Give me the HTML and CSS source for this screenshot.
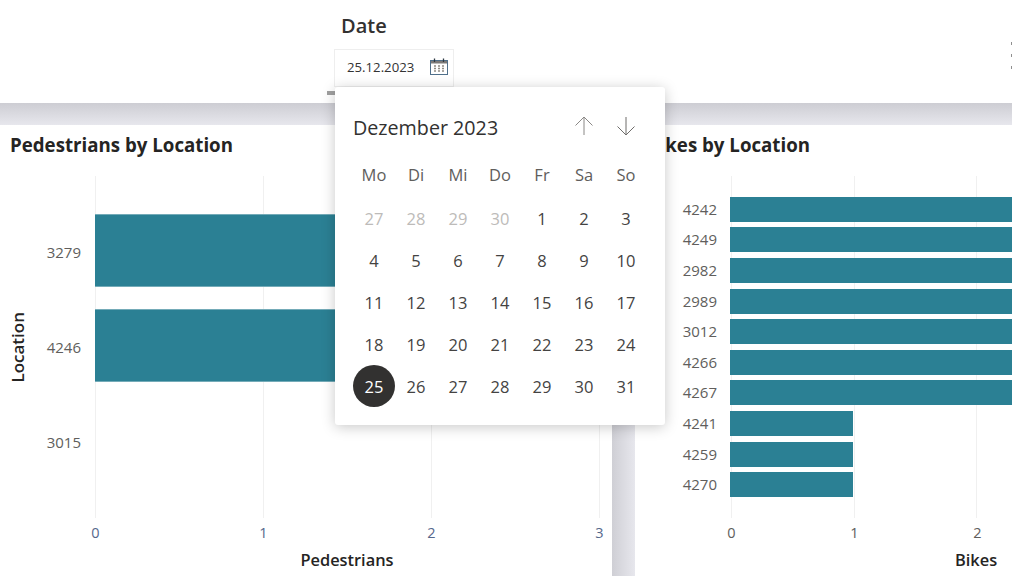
FILE: index.html
```html
<!DOCTYPE html>
<html lang="de">
<head>
<meta charset="utf-8">
<title>Report</title>
<link rel="stylesheet" href="styles.css">
</head>
<body>
<div class="page">
  <header class="top">
    <div class="slicer">
      <div class="slicer-title">Date</div>
      <div class="date-input">
        <span>25.12.2023</span>
        <svg class="cal-icon" width="18" height="18" viewBox="0 0 18 18">
          <rect x="0.5" y="2.5" width="17" height="14" fill="none" stroke="#4f6f8a" stroke-width="1"/>
          <rect x="1" y="3" width="16" height="2.5" fill="#7d7a78"/>
          <path d="M4.5 0.5v3.5M13.5 0.5v3.5" stroke="#2f3a44" stroke-width="1.3"/>
          <path d="M4 8h2M8 8h2M12 8h2M4 10.5h2M8 10.5h2M12 10.5h2M4 13h2M8 13h2M12 13h2" stroke="#8f8a84" stroke-width="1.3"/>
        </svg>
      </div>
      <div class="handle"></div>
    </div>
    <div class="more"><i></i><i></i><i></i></div>
  </header>
  <div class="band"></div>
  <main class="panels">
    <section class="panel panel-left">
      <h2 class="panel-title">Pedestrians by Location</h2>
      <div class="chart">
        <div class="grid"><i></i><i></i><i></i><i></i></div>
        <div class="row"><span class="cat">3279</span><div class="bar bar-long"></div></div>
        <div class="row"><span class="cat">4246</span><div class="bar bar-long"></div></div>
        <div class="row"><span class="cat">3015</span></div>
      </div>
      <div class="ticks"><span>0</span><span>1</span><span>2</span><span>3</span></div>
      <div class="axis-title">Pedestrians</div>
      <div class="y-title">Location</div>
    </section>
    <div class="gutter"></div>
    <section class="panel panel-right">
      <h2 class="panel-title">Bikes by Location</h2>
      <div class="chart">
        <div class="grid"><i></i><i></i><i></i><i></i></div>
        <div class="row"><span class="cat">4242</span><div class="bar bar-full"></div></div>
        <div class="row"><span class="cat">4249</span><div class="bar bar-full"></div></div>
        <div class="row"><span class="cat">2982</span><div class="bar bar-full"></div></div>
        <div class="row"><span class="cat">2989</span><div class="bar bar-full"></div></div>
        <div class="row"><span class="cat">3012</span><div class="bar bar-full"></div></div>
        <div class="row"><span class="cat">4266</span><div class="bar bar-full"></div></div>
        <div class="row"><span class="cat">4267</span><div class="bar bar-full"></div></div>
        <div class="row"><span class="cat">4241</span><div class="bar bar-one"></div></div>
        <div class="row"><span class="cat">4259</span><div class="bar bar-one"></div></div>
        <div class="row"><span class="cat">4270</span><div class="bar bar-one"></div></div>
      </div>
      <div class="ticks"><span>0</span><span>1</span><span>2</span></div>
      <div class="axis-title">Bikes</div>
    </section>
  </main>
  <div class="popup">
    <div class="popup-head">
      <span class="month">Dezember 2023</span>
      <div class="nav">
        <svg width="42" height="20" viewBox="0 0 42 20"><path d="M21 19V1M12.5 9.5L21 1l8.5 8.5" fill="none" stroke="#8a8886" stroke-width="1"/></svg>
        <svg width="42" height="20" viewBox="0 0 42 20"><path d="M21 1v18M12.5 10.5L21 19l8.5-8.5" fill="none" stroke="#6f6d6b" stroke-width="1"/></svg>
      </div>
    </div>
    <div class="cal">
      <b>Mo</b><b>Di</b><b>Mi</b><b>Do</b><b>Fr</b><b>Sa</b><b>So</b>
      <span class="off">27</span><span class="off">28</span><span class="off">29</span><span class="off">30</span><span>1</span><span>2</span><span>3</span>
      <span>4</span><span>5</span><span>6</span><span>7</span><span>8</span><span>9</span><span>10</span>
      <span>11</span><span>12</span><span>13</span><span>14</span><span>15</span><span>16</span><span>17</span>
      <span>18</span><span>19</span><span>20</span><span>21</span><span>22</span><span>23</span><span>24</span>
      <span class="sel">25</span><span>26</span><span>27</span><span>28</span><span>29</span><span>30</span><span>31</span>
    </div>
  </div>
</div>
</body>
</html>
```
FILE: styles.css
```css
* { box-sizing: border-box; }
html, body { margin: 0; padding: 0; background: #fff; }
body { font-family: "Open Sans", "Noto Sans", sans-serif; color: #252423; }
.page { position: relative; width: 1012px; height: 576px; overflow: hidden; display: flex; flex-direction: column; }

.top { height: 103px; display: flex; justify-content: space-between; flex: none; }
.slicer { position: relative; margin-left: 334px; width: 120px; padding-top: 12px; }
.slicer-title { margin-left: 7px; height: 37px; font-size: 20px; line-height: 27px; font-weight: 600; color: #333130; }
.date-input { height: 38px; border: 1px solid #eeeeee; display: flex; align-items: center; justify-content: space-between; padding: 0 5px 2px 12px; font-size: 13.2px; color: #333; }
.cal-icon { flex: none; }
.handle { position: absolute; left: -7px; top: 91px; width: 8px; height: 4px; background: #a0a0a0; }
.more { padding-top: 42px; display: flex; flex-direction: column; gap: 9px; }
.more i { display: block; width: 1px; height: 3px; background: #8f8f8f; }

.band { height: 22px; flex: none; background: linear-gradient(#cdcdd3, #e7e7ed); }
.panels { flex: 1; display: flex; min-height: 0; }
.panel { position: relative; overflow: hidden; background: #fff; }
.panel-left { width: 612px; flex: none; }
.panel-right { flex: 1; }
.gutter { width: 23px; flex: none; background: linear-gradient(90deg, #cfcfd5, #e7e7ed); }
.panel-title { margin: 0; height: 51px; padding-top: 6px; font-size: 18.7px; line-height: 28px; font-weight: 700; color: #252423; white-space: nowrap; }
.panel-left .panel-title { padding-left: 10px; }
.panel-right .panel-title { padding-left: 12px; }

.chart { position: relative; height: 342px; display: flex; flex-direction: column; justify-content: center; }
.grid { position: absolute; top: 0; bottom: 0; display: flex; justify-content: space-between; }
.grid i { display: block; width: 1px; background: #f0f0f0; }
.panel-left .grid { left: 95px; width: 505px; }
.panel-right .grid { left: 96px; width: 369px; }
.row { position: relative; display: flex; align-items: center; }
.panel-left .row { height: 95.4px; }
.panel-right .row { height: 30.6px; }
.panel-left .chart { padding-bottom: 2px; }
.cat { flex: none; text-align: right; font-size: 15px; color: #605e5c; }
.panel-left .cat { width: 81px; padding-top: 2px; }
.panel-right .cat { width: 82px; padding-bottom: 1px; }
.bar { flex: none; background: #2b8094; }
.panel-left .bar { height: 73px; margin-left: 14px; border-top: 1px solid #74abb8; border-bottom: 1px solid #74abb8; }
.panel-right .bar { height: 25px; margin-left: 13px; }
.bar-long { width: 336px; }
.bar-full { width: 300px; }
.bar-one { width: 123px; }

.ticks { display: flex; justify-content: space-between; height: 31px; padding-top: 5px; font-size: 14.5px; line-height: 20px; color: #605e5c; }
.panel-left .ticks { margin-left: 95px; width: 505px; }
.panel-right .ticks { margin-left: 96px; width: 247px; }
.ticks span { width: 1px; display: flex; justify-content: center; }
.panel-left .ticks span { color: #56688c; }
.axis-title { font-size: 16.4px; line-height: 22px; font-weight: 600; color: #252423; }
.panel-left .axis-title { text-align: center; width: 694px; }
.panel-right .axis-title { margin-left: 320px; width: 42px; text-align: center; }
.y-title { position: absolute; left: 8px; top: 187px; line-height: 20px; font-size: 17px; font-weight: 600; writing-mode: vertical-rl; transform: rotate(180deg); width: 20px; }

.popup { position: absolute; left: 335px; top: 87px; width: 330px; height: 338px; background: #fff; border-radius: 3px; box-shadow: 0 2px 14px rgba(0,0,0,.22); padding: 0 18px; }
.popup-head { height: 66px; display: flex; align-items: center; justify-content: space-between; padding-top: 15px; }
.month { font-size: 19.7px; color: #323130; }
.nav { display: flex; margin-top: -4px; }
.nav svg { display: block; }
.cal { display: grid; grid-template-columns: repeat(7, 42px); grid-template-rows: 44px repeat(5, 42px); font-size: 16.5px; color: #444342; }
.cal b, .cal span { display: flex; align-items: center; justify-content: center; font-weight: 400; }
.cal b { height: 42px; color: #605e5c; }
.cal .off { color: #bdbbb9; }
.cal .sel { background: #323130; color: #fff; border-radius: 50%; }
```
